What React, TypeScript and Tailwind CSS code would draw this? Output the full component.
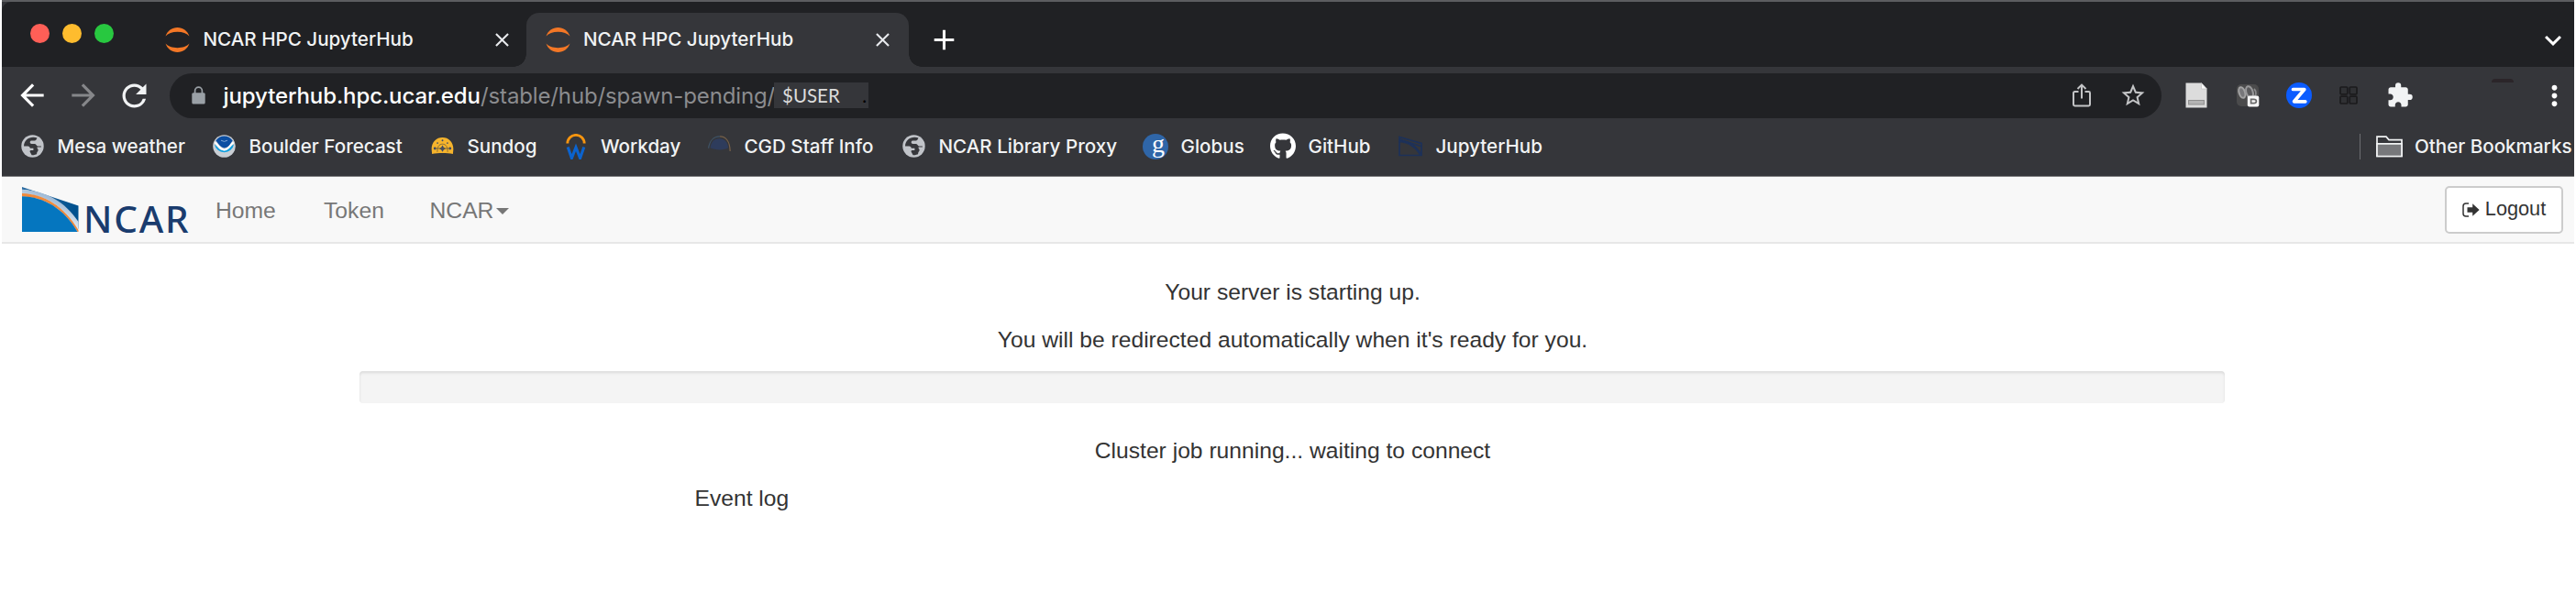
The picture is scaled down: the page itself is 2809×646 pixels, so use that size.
import type { ReactNode } from "react";
import { FaGithub } from "react-icons/fa";
import {
  MdAdd,
  MdArrowBack,
  MdArrowForward,
  MdClose,
  MdExpandMore,
  MdExtension,
  MdMoreVert,
  MdRefresh,
  MdStarBorder,
} from "react-icons/md";

function JupyterIcon() {
  return (
    <svg viewBox="0 0 27 27" className="h-[27px] w-[27px] shrink-0" fill="#f37726">
      <path d="M0.5 9.5C2.5 3.8 7.6 0 13.5 0s11 3.8 13 9.5C23.8 6.6 19 4.8 13.5 4.8S3.2 6.6 0.5 9.5z" />
      <path d="M0.5 17.5C2.5 23.2 7.6 27 13.5 27s11-3.8 13-9.5c-2.7 2.9-7.5 4.7-13 4.7S3.2 20.4 0.5 17.5z" />
    </svg>
  );
}

function GlobeIcon() {
  return (
    <svg viewBox="0 0 25 25" className="h-[25px] w-[25px]">
      <circle cx="12.5" cy="12.5" r="12.2" fill="#c1c4c9" />
      <path d="M17.5 3.6C14 2 9 2.6 6 5.6 4 7.6 3 10 3 12.4h4.4c1.4 0 2.4 1 2.4 2.3h3.6v2.4h-2.6c-1.3 0-1.6 1.4-.8 2.2l1.6 2.9c4 .4 7.8-1.8 9.4-5.2.8-1.8 1-3 .9-4.6h-3.6c-1 0-1.4-.5-1.8-1.3-.4-.9-1.2-1.2-2.2-1.2h-2.8c-1 0-1.8-.7-1.8-1.6 0-1 .8-1.7 1.8-1.7h2.2c1.8 0 3.2-1.2 3.5-2.7z" fill="#36373b" />
      <path d="M17.6 13.4h5.2c-.2 3.4-2.2 6.6-5.6 8.3-.2-1.6.2-2.6 1-3.6.8-1.2.4-2.6-.6-3.2z" fill="#c1c4c9" />
    </svg>
  );
}

function NoaaIcon() {
  return (
    <svg viewBox="0 0 25 25" className="h-[25px] w-[25px]">
      <circle cx="12.5" cy="12.5" r="12.3" fill="#c9ced4" />
      <path d="M3.3 6.6A10.8 10.8 0 0 1 21.7 6.6C19.5 9 18.6 13.6 12.6 14.6 7.8 13.8 6 9.4 3.3 6.6z" fill="#0b4ea2" />
      <path d="M1.9 10.6c3 2 5 6.8 10.4 6.8s6.6-5 10.8-6.8a10.8 10.8 0 0 1-21.2 0z" fill="#0c9fe0" />
      <path d="M2.4 8.4c3.6 2.4 5 8 10 8s6.4-5.4 10.2-8" fill="none" stroke="#fff" strokeWidth="2" />
      <path d="M9 6.2l3.5 1.2L16 6.2" fill="none" stroke="#7fa6d6" strokeWidth="1" />
    </svg>
  );
}

function SundogIcon() {
  return (
    <svg viewBox="0 0 25 20" className="h-[19px] w-[25px]">
      <path d="M0 13.5C0 5 5.6 0 12.5 0S25 5 25 13.5l-.5 5.5c-7-1.5-17-1.5-24 0z" fill="#f6b42c" />
      <g fill="#3c4a68">
        <circle cx="3.8" cy="12.6" r="1.5" />
        <circle cx="21.2" cy="12.6" r="1.5" />
        <circle cx="12.5" cy="3.4" r="1" />
        <circle cx="6.8" cy="6.4" r=".9" />
        <circle cx="18.2" cy="6.4" r=".9" />
        <path d="M12.5 9l1.4 2.4 2.4 1.4-2.4 1.4-1.4 2.4-1.4-2.4-2.4-1.4 2.4-1.4z" />
      </g>
      <path d="M3.8 12.6h17.4M6.6 16.6c0-6 2-9 5.9-9s5.900 3 5.900 9" fill="none" stroke="#6a5a38" strokeWidth=".8" />
    </svg>
  );
}

function WorkdayIcon() {
  return (
    <svg viewBox="0 0 22 28" className="h-[28px] w-[22px]">
      <path d="M1.8 10.6a9.2 9.2 0 0 1 18.4 0" fill="none" stroke="#f8950f" strokeWidth="2.9" />
      <path d="M2.2 14.600l4.200 12L11 14.800l4.600 11.800 4.200-12" fill="none" stroke="#0b63ce" strokeWidth="3.1" />
    </svg>
  );
}

function CgdIcon() {
  return (
    <svg viewBox="0 0 27 20" className="-mt-1 h-[19px] w-[27px]">
      <path d="M3 14C4 6.5 8 3.4 13.5 3.4S23 7 23.6 14c-4 3-15 3-20.6 0z" fill="#2e3c5c" />
      <path d="M1 14.5C2 6 7 1 14 1" fill="none" stroke="#3f5468" strokeWidth="1.3" />
      <path d="M14 1c7 0 11.500 6 11.800 17" fill="none" stroke="#77614a" strokeWidth="1.3" />
    </svg>
  );
}

function GlobusIcon() {
  return (
    <span className="flex h-[28px] w-[28px] items-center justify-center rounded-full bg-[#2f66a8] pl-[6px] pb-[6px] font-['Liberation_Serif',serif] text-[28px] leading-none text-white">
      g
    </span>
  );
}

function HubIcon() {
  return (
    <svg viewBox="0 0 26 22" className="h-[23px] w-[26px]" fill="none" stroke="#1d3159" strokeWidth="1.7">
      <path d="M1 1l24 7v13H1z" />
      <path d="M1 5.500C11 6 20 12 24.500 21" strokeWidth="2.6" />
      <path d="M1 3.500L24 11" />
    </svg>
  );
}

function FolderIcon() {
  return (
    <svg viewBox="0 0 29 24" className="h-[24px] w-[29px]" fill="none" stroke="#f1f3f4" strokeWidth="1.7">
      <path d="M1 22.500V1.200h10l3 3.400h14v17.900z" fill="#35363a" />
      <path d="M1 8.800h27v13.700H1z" fill="#77787b" />
    </svg>
  );
}

function LockIcon() {
  return (
    <svg viewBox="0 0 15 20" className="h-[20px] w-[15px]">
      <path d="M3.600 8V5a3.900 3.900 0 0 1 7.800 0v3" fill="none" stroke="#9aa0a6" strokeWidth="1.7" />
      <rect x="0.300" y="7.300" width="14.400" height="12.200" rx="1.500" fill="#9aa0a6" />
    </svg>
  );
}

function ShareIcon() {
  return (
    <svg viewBox="0 0 20 26" className="h-[26px] w-[20px]" fill="none" stroke="#c3c4c6" strokeWidth="2">
      <path d="M6.500 9H2.400C1.600 9 1 9.600 1 10.400v12.700c0 .8.600 1.400 1.400 1.400h15.200c.8 0 1.400-.6 1.400-1.400V10.400c0-.8-.6-1.400-1.400-1.400h-4.100" />
      <path d="M10 16.500V2M5.500 6L10 1.600 14.500 6" />
    </svg>
  );
}

function DocIcon() {
  return (
    <svg viewBox="0 0 24 28" className="h-[28px] w-[24px]">
      <path d="M.5.5h17l6 6.500v20.500H.5z" fill="#dcdcdc" />
      <path d="M17.500.5v6.500h6z" fill="#fafafa" stroke="#bdbdbd" strokeWidth=".6" />
      <rect x="3.600" y="19.500" width="16.800" height="4.500" fill="#b4b4b4" stroke="#8e8e8e" />
    </svg>
  );
}

function PrivacyIcon() {
  return (
    <svg viewBox="0 0 26 26" className="h-[26px] w-[26px]">
      <rect x="1" y="1" width="24" height="24" rx="5" fill="#4b4b4c" />
      <ellipse cx="6.800" cy="10" rx="3.200" ry="6" transform="rotate(-18 6.800 10)" fill="#77777a" stroke="#a3a3a3" strokeWidth="2" />
      <ellipse cx="15" cy="9.500" rx="3.600" ry="6.500" transform="rotate(-18 15 9.500)" fill="#5a5a5c" stroke="#98989a" strokeWidth="2" />
      <path d="M20 6c3 3 2.500 8-1 9" fill="none" stroke="#8a8a8c" strokeWidth="1.800" />
      <rect x="12.800" y="13.500" width="12.500" height="12" rx="2" fill="#f7f7f7" />
      <path d="M16.600 17.300h3c1.700 0 2.800.9 2.800 2.200s-1.100 2.200-2.800 2.200h-3z" fill="#f7f7f7" stroke="#6b6b6b" strokeWidth="1.700" />
    </svg>
  );
}

function ZoomIcon() {
  return (
    <svg viewBox="0 0 28 28" className="h-[28px] w-[28px]">
      <circle cx="14" cy="14" r="14" fill="#0b5cff" />
      <path d="M7.500 7.500h12.300L8.600 20.800h12.200" fill="none" stroke="#fff" strokeWidth="3.700" strokeLinecap="round" strokeLinejoin="round" />
    </svg>
  );
}

function GridIcon() {
  return (
    <svg viewBox="0 0 20 20" className="h-[20px] w-[20px]" fill="#303134" stroke="#1b1b1d" strokeWidth="1.700">
      <rect x="1" y="1" width="7.800" height="7.800" rx="1" />
      <rect x="11.200" y="1" width="7.800" height="7.800" rx="1" />
      <rect x="1" y="11.200" width="7.800" height="7.800" rx="1" />
      <rect x="11.200" y="11.200" width="7.800" height="7.800" rx="1" />
    </svg>
  );
}

function LogoutIcon() {
  return (
    <svg viewBox="0 0 19 16" className="h-[16px] w-[19px]">
      <path d="M7 1H4C2.300 1 1 2.300 1 4v8c0 1.700 1.300 3 3 3h3" fill="none" stroke="#333" strokeWidth="1.500" />
      <path d="M5.500 5.200h5.700V1.200L18.600 8l-7.400 6.800v-4H5.500z" fill="#333" />
    </svg>
  );
}

function NcarLogo() {
  return (
    <div className="flex h-[49px] w-[211px] shrink-0 items-end gap-[5.500px]">
      <svg viewBox="0 0 61.500 49" className="h-[49px] w-[61.500px] shrink-0">
        <defs>
          <linearGradient id="sky" x1="0" y1="0" x2="1" y2="0.300">
            <stop offset="0" stopColor="#2f6ea3" />
            <stop offset="1" stopColor="#00518f" />
          </linearGradient>
          <linearGradient id="haze" x1="0" y1="1" x2="0.600" y2="0">
            <stop offset="0.300" stopColor="#ffffff" />
            <stop offset="1" stopColor="#7fa3c8" />
          </linearGradient>
        </defs>
        <path d="M0 0l61.500 20.500V46C48 22 28 5 0 2.800z" fill="url(#sky)" />
        <path d="M0 3C26 4 47 16 61.500 38v9C46 22 28 9 0 7.500z" fill="url(#haze)" />
        <path d="M0 7c25 1 46 14 61.500 40v2h-1C45 23 24 11 0 10.500z" fill="#f08a3c" />
        <path d="M0 10.300C24 11 45 23 60.500 49H0z" fill="#0576bf" />
      </svg>
      <span className="-mb-[10px] font-['Noto_Sans',sans-serif] text-[40.500px] leading-[49px] font-medium tracking-[1.800px] text-[#1a3c6e]">
        NCAR
      </span>
    </div>
  );
}

function TabLabel() {
  return <span className="ml-[14.500px] text-[20.600px] leading-none font-medium whitespace-nowrap text-[#f1f3f4]">NCAR HPC JupyterHub</span>;
}

function Bookmark({ icon, label, width }: { icon: ReactNode; label: string; width: string }) {
  return (
    <a className={`flex shrink-0 items-center ${width}`}>
      <span className="flex w-[28px] shrink-0 justify-center">{icon}</span>
      <span className="mt-px ml-[13.500px] text-[20.600px] leading-none font-medium whitespace-nowrap text-[#f1f3f4]">{label}</span>
    </a>
  );
}

export default function App() {
  return (
    <div className="h-[646px] w-[2809px] overflow-hidden bg-white pr-[2px] pl-[2px]">
      <header className="border-t-2 border-b border-t-[#5c5d60] border-b-[#7c7c7e] bg-[#35363a] font-['Inter',sans-serif]">
        <div className="flex h-[71px] items-end rounded-tl-[10px] bg-[#202124] pl-[31px]">
          <div className="mb-[26px] flex gap-[14px]">
            <span className="h-[21px] w-[21px] rounded-full bg-[#ff5f57]" />
            <span className="h-[21px] w-[21px] rounded-full bg-[#febc2e]" />
            <span className="h-[21px] w-[21px] rounded-full bg-[#28c840]" />
          </div>
          <div className="ml-[56px] flex h-[59px] w-[393.500px] items-center pr-[14px]">
            <JupyterIcon />
            <TabLabel />
            <MdClose className="ml-auto h-[25px] w-[25px] text-[#e8eaed]" />
          </div>
          <div className="relative flex h-[59px] w-[417.500px] items-center rounded-t-[14px] bg-[#35363a] pr-[16px] pl-[21px]">
            <span className="absolute bottom-0 -left-[14px] h-[14px] w-[14px] bg-[radial-gradient(circle_at_0_0,transparent_13.500px,#35363a_14px)]" />
            <span className="absolute -right-[14px] bottom-0 h-[14px] w-[14px] bg-[radial-gradient(circle_at_100%_0,transparent_13.500px,#35363a_14px)]" />
            <JupyterIcon />
            <TabLabel />
            <MdClose className="ml-auto h-[25px] w-[25px] text-[#e8eaed]" />
          </div>
          <MdAdd className="mb-[11px] ml-[20px] h-[37px] w-[37px] text-white" />
          <MdExpandMore className="mr-[5px] mb-[11px] ml-auto h-[36px] w-[36px] text-white" />
        </div>

        <div className="flex h-[62px] items-center">
          <MdArrowBack className="ml-[14px] h-[38px] w-[38px] shrink-0 text-white" />
          <MdArrowForward className="ml-[18px] h-[38px] w-[38px] shrink-0 text-[#86878a]" />
          <MdRefresh className="ml-[17px] h-[39px] w-[39px] shrink-0 text-[#f1f3f4]" />
          <div className="ml-[18.500px] flex h-[49px] w-[2172.500px] shrink-0 items-center rounded-full bg-[#202124] pr-[16.500px] pl-[24px]">
            <LockIcon />
            <span className="mt-px ml-[20px] w-[280.500px] text-[24px] leading-none font-medium tracking-[-0.100px] whitespace-nowrap text-white">jupyterhub.hpc.ucar.edu</span>
            <span className="mt-px w-[320px] text-[24px] leading-none tracking-[-0.130px] whitespace-nowrap text-[#8b8c8f]">/stable/hub/spawn-pending/</span>
            <span className="flex h-[28px] w-[103px] items-center justify-between bg-[#35363a] pr-[2px] pl-[9px] font-['Lato',sans-serif] text-[20.500px] leading-none text-[#dcdcdc]">
              $USER
              <span className="text-black">.</span>
            </span>
            <span className="ml-auto">
              <ShareIcon />
            </span>
            <MdStarBorder className="ml-[30.500px] h-[30px] w-[30px] text-[#c3c4c6]" />
          </div>
          <div className="flex flex-1 items-center">
            <span className="ml-[26px]">
              <DocIcon />
            </span>
            <span className="ml-[31px]">
              <PrivacyIcon />
            </span>
            <span className="ml-[28.500px]">
              <ZoomIcon />
            </span>
            <span className="ml-[30.500px]">
              <GridIcon />
            </span>
            <MdExtension className="ml-[31px] h-[30px] w-[30px] text-[#f1f3f4]" />
            <span className="mb-[32px] ml-[85px] h-[4.500px] w-[24px] rounded-t-full bg-[#2b2529]" />
            <MdMoreVert className="ml-auto h-[35px] w-[35px] text-white" />
            <span className="w-[4.500px]" />
          </div>
        </div>

        <nav className="flex h-[57px] items-center pb-[8px] pl-[19px]">
          <Bookmark icon={<GlobeIcon />} label="Mesa weather" width="w-[209px]" />
          <Bookmark icon={<NoaaIcon />} label="Boulder Forecast" width="w-[238px]" />
          <Bookmark icon={<SundogIcon />} label="Sundog" width="w-[145.500px]" />
          <Bookmark icon={<WorkdayIcon />} label="Workday" width="w-[156.500px]" />
          <Bookmark icon={<CgdIcon />} label="CGD Staff Info" width="w-[212px]" />
          <Bookmark icon={<GlobeIcon />} label="NCAR Library Proxy" width="w-[264px]" />
          <Bookmark icon={<GlobusIcon />} label="Globus" width="w-[139px]" />
          <Bookmark icon={<FaGithub className="h-[29px] w-[29px] text-white" />} label="GitHub" width="w-[139px]" />
          <Bookmark icon={<HubIcon />} label="JupyterHub" width="w-[180px]" />
          <span className="ml-auto h-[28px] w-[1.500px] bg-[#6d6e71]" />
          <span className="ml-[17px]">
            <FolderIcon />
          </span>
          <span className="mt-px mr-[2.500px] ml-[12.500px] text-[20.600px] leading-none font-medium whitespace-nowrap text-[#f1f3f4]">Other Bookmarks</span>
        </nav>
      </header>

      <div className="flex h-[73px] items-center border-b-2 border-[#e7e7e7] bg-[#f8f8f8] pl-[22px] font-['Liberation_Sans',Arial,sans-serif] text-[24.700px] text-[#777]">
        <NcarLogo />
        <a className="mt-[2px] w-[118px]">Home</a>
        <a className="mt-[2px] w-[115.500px]">Token</a>
        <a className="mt-[2px] flex items-center">
          NCAR
          <span className="mt-[3px] ml-[3px] border-x-[7px] border-t-[7px] border-x-transparent border-t-[#777]" />
        </a>
        <button className="mr-[12px] ml-auto flex h-[52px] w-[129px] items-center justify-center gap-[6px] rounded-[5px] border-2 border-[#ccc] bg-white text-[21.700px] text-[#333]">
          <LogoutIcon />
          Logout
        </button>
      </div>

      <main className="flex flex-col items-center pt-[34.500px] font-['Liberation_Sans',Arial,sans-serif] text-[24.650px] leading-[35px] text-[#333]">
        <p className="ml-[10px]">Your server is starting up.</p>
        <p className="mt-[17px] ml-[10px]">You will be redirected automatically when it's ready for you.</p>
        <div className="mt-[17px] ml-[9px] h-[35px] w-[2033.500px] rounded-[4px] bg-[#f4f4f4] shadow-[inset_0_2px_3px_rgba(0,0,0,0.1)]" />
        <p className="mt-[34.500px] ml-[10px]">Cluster job running... waiting to connect</p>
        <p className="mt-[17px] ml-[755.500px] self-start">Event log</p>
      </main>
    </div>
  );
}
